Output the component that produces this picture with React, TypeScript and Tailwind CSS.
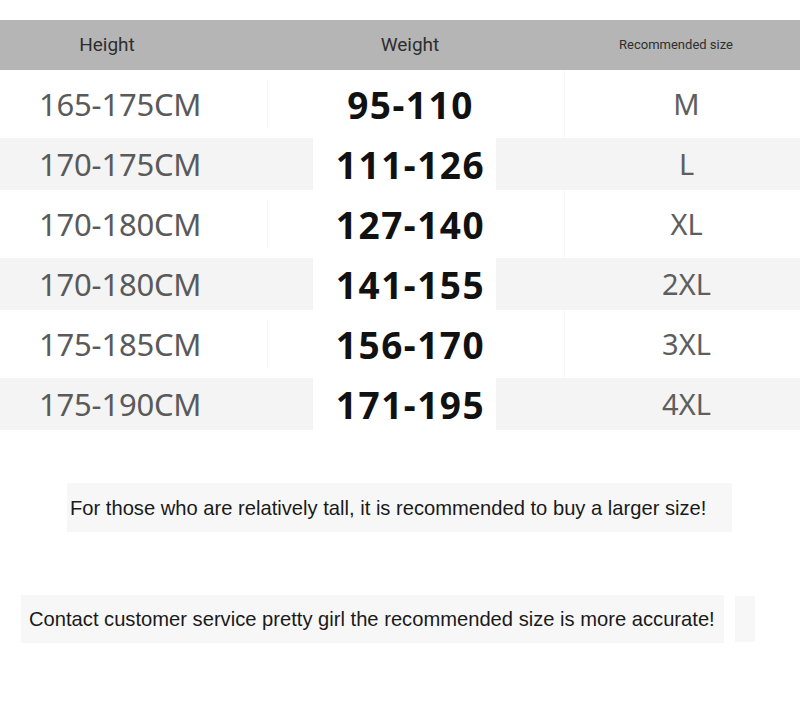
const ROWS = [
  { height: '165-175CM', weight: '95-110', size: 'M' },
  { height: '170-175CM', weight: '111-126', size: 'L' },
  { height: '170-180CM', weight: '127-140', size: 'XL' },
  { height: '170-180CM', weight: '141-155', size: '2XL' },
  { height: '175-185CM', weight: '156-170', size: '3XL' },
  { height: '175-190CM', weight: '171-195', size: '4XL' },
]

function SizeRow({ row, striped }: { row: (typeof ROWS)[number]; striped: boolean }) {
  const band = striped ? 'bg-[#f4f4f4]' : 'bg-white'
  return (
    <div className={`flex ${striped ? 'h-[52px]' : 'h-[68px]'}`}>
      <div className={`w-[313px] flex items-center pl-[39px] ${band}`}>
        <span className={`text-[31px] text-[#5a5a5a] tracking-[-0.2px] ${striped ? '' : 'border-r border-[#f7f7f7] pr-[66px]'}`}>
          {row.height}
        </span>
      </div>
      <div className="w-[183px] flex items-center justify-center bg-white pl-[12px]">
        <span className="text-[37px] font-bold text-[#111] tracking-[1.5px] leading-none">{row.weight}</span>
      </div>
      <div className={`flex-1 flex items-center ${band}`}>
        <div className={`w-[69px] self-stretch ${striped ? '' : 'border-r border-[#f7f7f7]'}`} />
        <span className="flex-1 text-center text-[29px] text-[#5e5e5e] pl-[8px]">{row.size}</span>
      </div>
    </div>
  )
}

function Note({ children }: { children: string }) {
  return (
    <span className="inline-block whitespace-nowrap origin-left scale-x-[0.96] text-[21px] text-[#1a1a1a] font-['Liberation_Sans',sans-serif]">
      {children}
    </span>
  )
}

export default function App() {
  return (
    <div className="w-[800px] h-[715px] bg-white font-['Noto_Sans','Open_Sans',sans-serif] overflow-hidden">
      <div className="h-[20px]" />
      <div className="h-[50px] bg-[#b5b5b5] flex items-center font-['Roboto','Liberation_Sans',sans-serif] text-[#2e2e2e]">
        <div className="w-[214px] text-center text-[19px]">Height</div>
        <div className="w-[392px] text-center text-[19px]">Weight</div>
        <div className="flex-1 text-center text-[13px] pr-[54px]">Recommended size</div>
      </div>
      {ROWS.map((row, i) => (
        <SizeRow key={i} row={row} striped={i % 2 === 1} />
      ))}

      <div className="mt-[53px] ml-[67px] w-[665px] h-[49px] bg-[#f7f7f7] flex items-center">
        <div className="ml-[3px]">
          <Note>For those who are relatively tall, it is recommended to buy a larger size!</Note>
        </div>
      </div>

      <div className="mt-[63px] flex items-center">
        <div className="ml-[21px] w-[703px] h-[48px] bg-[#f7f7f7] flex items-center">
          <div className="ml-[8px]">
            <Note>Contact customer service pretty girl the recommended size is more accurate!</Note>
          </div>
        </div>
        <div className="ml-[11px] w-[20px] h-[46px] bg-[#f7f7f7]" />
      </div>
    </div>
  )
}
